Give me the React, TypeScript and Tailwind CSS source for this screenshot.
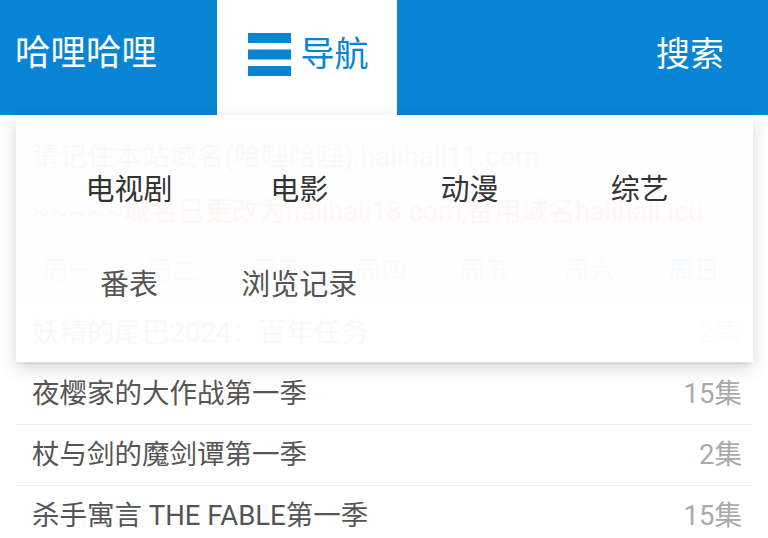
import React from 'react';

const navRows = [
  [
    { label: '电视剧', tone: 'text-[#333]' },
    { label: '电影', tone: 'text-[#333]' },
    { label: '动漫', tone: 'text-[#333]' },
    { label: '综艺', tone: 'text-[#333]' },
  ],
  [
    { label: '番表', tone: 'text-[#555]' },
    { label: '浏览记录', tone: 'text-[#555]' },
  ],
];

const weekdays = ['周一', '周二', '周三', '周四', '周五', '周六', '周日'];

const shows = [
  { title: '妖精的尾巴2024：百年任务', count: '2集' },
  { title: '夜樱家的大作战第一季', count: '15集' },
  { title: '杖与剑的魔剑谭第一季', count: '2集' },
  { title: '杀手寓言 THE FABLE第一季', count: '15集' },
];

const MenuIcon = () => (
  <svg width="43" height="43" viewBox="0 0 43 43" className="shrink-0">
    <rect x="0" y="0" width="43" height="10" fill="#0884d5" />
    <rect x="0" y="16.5" width="43" height="10" fill="#0884d5" />
    <rect x="0" y="33" width="43" height="10" fill="#0884d5" />
  </svg>
);

export default function App() {
  return (
    <div className="relative w-[768px] h-[538px] overflow-hidden bg-white font-['Roboto','Noto_Sans_CJK_SC',sans-serif]">
      {/* top bar */}
      <header className="flex h-[115px]">
        <div className="w-[217px] bg-[#0884d5] flex items-center pl-[15px] pb-[7px] text-white text-[35.5px]">
          哈哩哈哩
        </div>
        <div className="w-[180px] bg-white flex items-center justify-center gap-[10px] pb-[7px] pl-[2px]">
          <MenuIcon />
          <span className="text-[34px] text-[#0884d5]">导航</span>
        </div>
        <div className="flex-1 bg-[#0884d5] flex items-center justify-end pr-[44px] pb-[7px] text-white text-[34px]">
          搜索
        </div>
      </header>

      {/* page underneath */}
      <main className="mx-4 mt-[15px]">
        <div className="bg-[#e0e0e0]">
          <div className="h-[55px] flex items-center pl-4 border-b border-[#d0d0d0] text-[27.5px] text-[#666] whitespace-nowrap">
            请记住本站域名(哈哩哈哩):halihali11.com
          </div>
          <div className="h-[55px] flex items-center pl-4 text-[27px] text-[#f00] whitespace-nowrap">
            ~~~~~域名已更改为halihali18.com,备用域名halihali.icu
          </div>
        </div>
        <div className="grid grid-cols-7 h-[63px] bg-[#e0e0e0] pr-[6px]">
          {weekdays.map((d, i) => (
            <div
              key={d}
              className={`flex items-center justify-center text-[26px] ${i === 6 ? 'text-[#0884d5]' : 'text-[#888]'}`}
            >
              {d}
            </div>
          ))}
        </div>
        <ul>
          {shows.map((s) => (
            <li
              key={s.title}
              className="h-[61px] flex items-center justify-between pl-4 pr-[10px] border-b border-[#eee]"
            >
              <span className="text-[27.5px] text-[#555] whitespace-nowrap">{s.title}</span>
              <span className="text-[27.5px] text-[#aaa]">{s.count}</span>
            </li>
          ))}
        </ul>
      </main>

      {/* dropdown navigation */}
      <nav className="absolute top-[115px] left-4 w-[737px] h-[247px] bg-white/[0.965] shadow-[0_6px_16px_rgba(0,0,0,0.16)] pt-[28px] px-[28px]">
        {navRows.map((row, r) => (
          <div key={r} className="grid grid-cols-4 h-[95px]">
            {row.map((item) => (
              <a key={item.label} className={`flex items-center justify-center text-[29px] ${item.tone}`}>
                {item.label}
              </a>
            ))}
          </div>
        ))}
      </nav>
    </div>
  );
}
